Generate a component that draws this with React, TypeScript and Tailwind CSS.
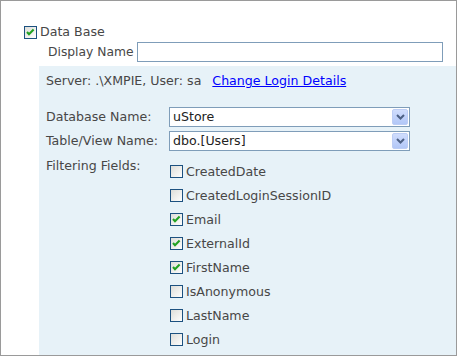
import React from "react";

function Check({ checked }: { checked?: boolean }) {
  return (
    <svg width="13" height="13" viewBox="0 0 13 13" className="shrink-0 block">
      <defs>
        <linearGradient id="cbg" x1="0" y1="0" x2="1" y2="1">
          <stop offset="0" stopColor="#dcdcd7" />
          <stop offset="1" stopColor="#ffffff" />
        </linearGradient>
      </defs>
      <rect x="0.5" y="0.5" width="12" height="12" fill="url(#cbg)" stroke="#1c5180" />
      {checked && (
        <path d="M3 6 L5 8.2 L9.6 3.6" fill="none" stroke="#21a121" strokeWidth="2.1" />
      )}
    </svg>
  );
}

function Select({ value }: { value: string }) {
  return (
    <div className="w-[241px] h-[20px] border border-[#7f9db9] bg-white flex items-center justify-between">
      <span className="pl-[3px] text-[#222] leading-[16px]">{value}</span>
      <div className="w-[16px] h-[16px] mr-[1px] rounded-[2px] border border-[#bccdf5] bg-gradient-to-b from-[#d0ddfd] to-[#b2c7f7] flex items-center justify-center">
        <svg width="9" height="6" viewBox="0 0 9 6">
          <path d="M1 1 L4.5 4.5 L8 1" fill="none" stroke="#4d6185" strokeWidth="2" />
        </svg>
      </div>
    </div>
  );
}

const fields: [string, boolean][] = [
  ["CreatedDate", false],
  ["CreatedLoginSessionID", false],
  ["Email", true],
  ["ExternalId", true],
  ["FirstName", true],
  ["IsAnonymous", false],
  ["LastName", false],
  ["Login", false],
];

export default function App() {
  return (
    <div
      className="w-[457px] h-[356px] border border-[#9a9a9a] bg-white overflow-hidden flex flex-col text-[12.6px] text-[#474747]"
      style={{ fontFamily: '"DejaVu Sans", Verdana, sans-serif' }}
    >
      <div className="flex items-center h-[16px] mt-[23px] pl-[23px]">
        <Check checked />
        <span className="ml-[3px] leading-[16px]">Data Base</span>
      </div>
      <div className="flex items-center mt-[2px] pl-[47px]">
        <span className="w-[89px] leading-[16px] text-[12.3px]">Display Name</span>
        <div className="w-[306px] h-[20px] border border-[#7f9db9] bg-white" />
      </div>
      <div className="flex-1 ml-[38px] mt-[4px] bg-[#e7f2f8] pl-[7px] pt-[7px]">
        <div className="flex leading-[16px] h-[16px]">
          <span>Server: .\XMPIE, User: sa</span>
          <a href="#" className="ml-[11px] text-[#0000ff] underline">Change Login Details</a>
        </div>
        <div className="flex items-center mt-[18px]">
          <span className="w-[123px] leading-[16px]">Database Name:</span>
          <Select value="uStore" />
        </div>
        <div className="flex items-center mt-[4px]">
          <span className="w-[123px] leading-[16px]">Table/View Name:</span>
          <Select value="dbo.[Users]" />
        </div>
        <div className="flex mt-[7px]">
          <span className="w-[123px] leading-[16px] h-[16px]">Filtering Fields:</span>
          <div className="flex flex-col pt-[1px] pl-[1px]">
            {fields.map(([name, c]) => (
              <div key={name} className="h-[24px] flex items-start pt-[6px]">
                <Check checked={c} />
                <span className="ml-[3px] leading-[13px]">{name}</span>
              </div>
            ))}
          </div>
        </div>
      </div>
    </div>
  );
}
